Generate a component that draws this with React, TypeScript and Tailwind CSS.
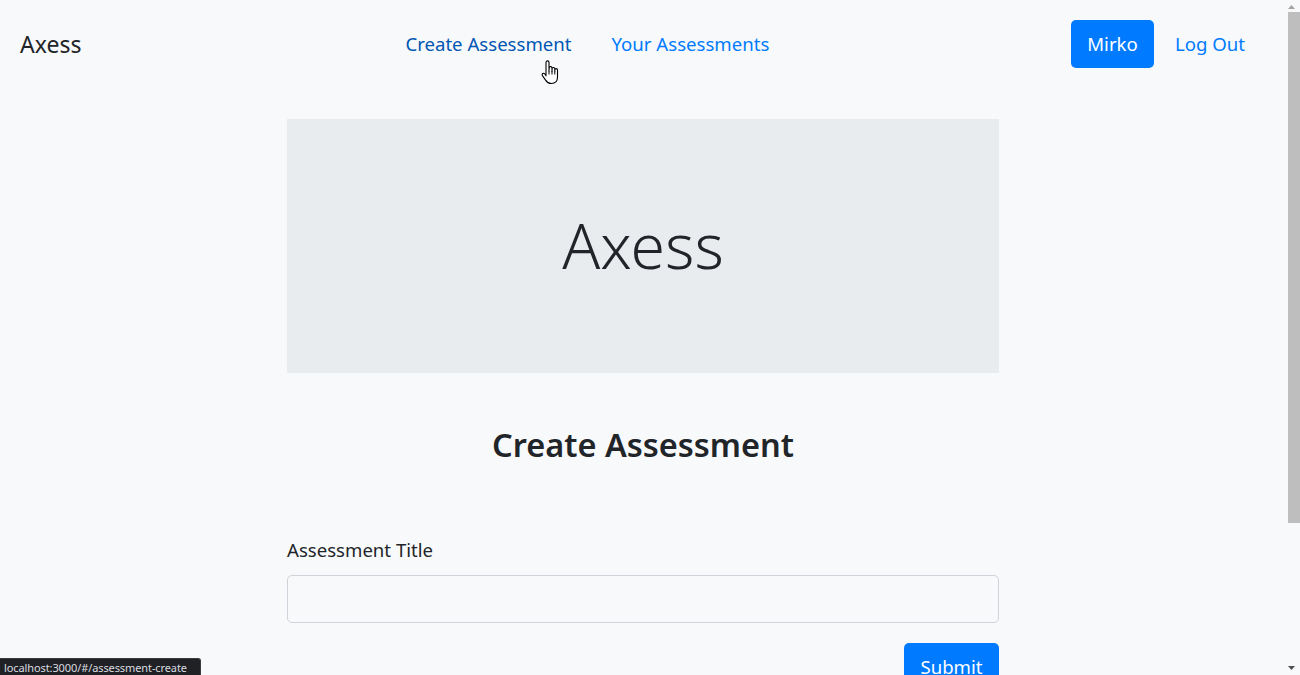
import React from "react";

const font = { fontFamily: '"Noto Sans", "Open Sans", sans-serif' };

function Cursor() {
  return (
    <svg className="absolute left-[540px] top-[60px]" width="24" height="28" viewBox="0 0 24 28">
      <path
        d="M6 2.5c0-1 .7-1.6 1.5-1.6S9 1.5 9 2.5V11l.2-3c0-.9.7-1.4 1.4-1.4s1.4.6 1.4 1.4v3.2l.1-2.4c0-.8.7-1.3 1.4-1.3s1.3.5 1.3 1.3v2.6l.1-1.6c0-.7.6-1.2 1.3-1.2s1.3.5 1.3 1.3V17c0 4-2.4 6.5-6.2 6.5-2.6 0-4.2-1-5.5-3.1L2.4 15.6c-.5-.8-.3-1.7.4-2.1.7-.4 1.5-.2 2 .5L6 15.8V2.5z"
        fill="#fff"
        stroke="#000"
        strokeWidth="1.1"
        strokeLinejoin="round"
      />
      <path d="M9 11v3.5M12 11v3.5M14.8 11.5v3" stroke="#000" strokeWidth="1" />
    </svg>
  );
}

export default function App() {
  return (
    <div className="relative w-[1300px] h-[675px] overflow-hidden bg-[#f8f9fa] flex" style={font}>
      <div className="flex-1 flex flex-col">
        <nav className="h-[88px] shrink-0 flex items-center pl-5 pr-[38px]">
          <span className="text-[23px] text-[#212529] leading-none">Axess</span>
          <div className="ml-[324px] flex items-center gap-[40px] text-[18.6px]">
            <span className="text-[#0056b3]">Create Assessment</span>
            <span className="text-[#007bff]">Your Assessments</span>
          </div>
          <div className="ml-auto flex items-center gap-[21px]">
            <span className="h-[48px] w-[83px] justify-center rounded-[5px] bg-[#007bff] text-white text-[18.6px] flex items-center">
              Mirko
            </span>
            <span className="text-[18.6px] text-[#007bff]">Log Out</span>
          </div>
        </nav>
        <main className="w-[712px] ml-[287px] mt-[31px] flex flex-col shrink-0">
          <div className="h-[254px] bg-[#e9ecef] flex items-center justify-center">
            <span className="text-[62.5px] font-light text-[#212529] leading-none -mt-[2px]">Axess</span>
          </div>
          <h2 className="mt-[52px] text-center text-[32.5px] font-semibold text-[#212529] leading-[1.2]">
            Create Assessment
          </h2>
          <label className="mt-[72px] text-[18.6px] text-[#212529] leading-[1.5]">Assessment Title</label>
          <div className="mt-[11px] h-[48px] rounded-[5px] border border-[#ced4da] bg-[#f8f9fa]" />
          <div className="mt-[20px] flex justify-end">
            <span className="h-[48px] w-[95px] justify-center rounded-[5px] bg-[#007bff] text-white text-[18.6px] flex items-center">
              Submit
            </span>
          </div>
        </main>
      </div>
      <div className="w-[17px] h-full relative bg-[#f8f9fa]">
        <svg className="absolute left-[4px] top-[4px]" width="9" height="6" viewBox="0 0 9 6">
          <path d="M4.5 1L8 5H1z" fill="#a3a3a3" />
        </svg>
        <div className="absolute left-[5px] right-0 top-[12px] h-[511px] bg-[#bebebe]" />
        <svg className="absolute left-[4px] bottom-[4px]" width="9" height="6" viewBox="0 0 9 6">
          <path d="M1 1h7L4.5 5z" fill="#505050" />
        </svg>
      </div>
      <div className="absolute left-0 bottom-0 h-[17px] w-[201px] bg-[#202124] rounded-tr-[3px] border-t border-r border-[#3c3c3c] flex items-center pl-[4px]">
        <span className="text-[11px] text-[#dadce0] leading-none whitespace-nowrap tracking-[-0.1px]" style={{ fontFamily: '"Noto Sans", sans-serif' }}>
          localhost:3000/#/assessment-create
        </span>
      </div>
      <Cursor />
    </div>
  );
}
